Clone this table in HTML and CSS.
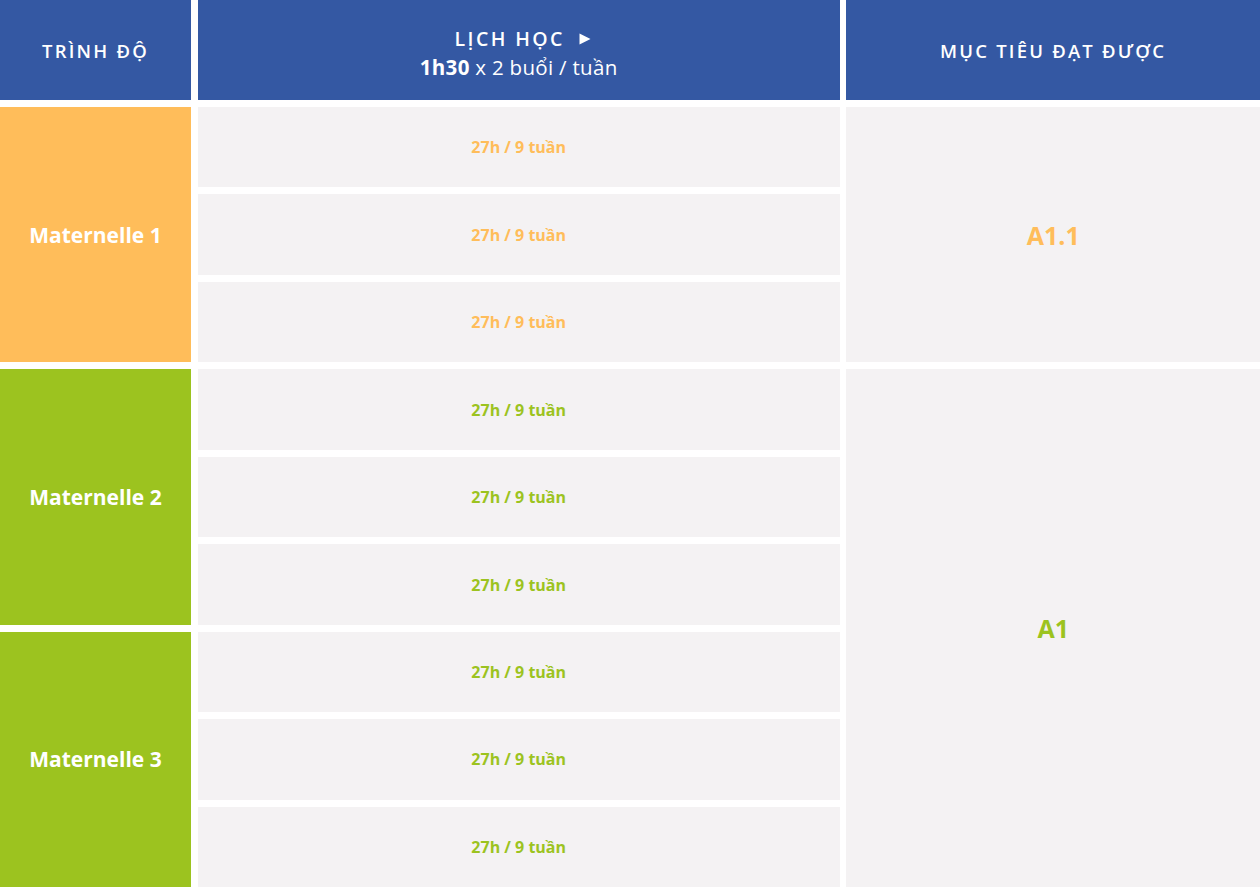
FILE: index.html
```html
<!DOCTYPE html>
<html lang="vi">
<head>
<meta charset="utf-8">
<title>Lịch học</title>
<link rel="stylesheet" href="styles.css">
</head>
<body>
<div class="table">
  <div class="head head-level">TRÌNH ĐỘ</div>
  <div class="head head-schedule">
    <div class="head-title"><span>LỊCH HỌC</span><svg class="tri" viewBox="0 0 12 12" width="12" height="12"><path d="M0.5 0.5 L11.5 6 L0.5 11.5 Z" fill="#fff"/></svg></div>
    <div class="head-sub"><b>1h30</b> x 2 buổi / tuần</div>
  </div>
  <div class="head head-goal">MỤC TIÊU ĐẠT ĐƯỢC</div>

  <div class="level orange r2">Maternelle 1</div>
  <div class="level green r5">Maternelle 2</div>
  <div class="level green r8">Maternelle 3</div>

  <div class="slot t-orange">27h / 9 tuần</div>
  <div class="slot t-orange">27h / 9 tuần</div>
  <div class="slot t-orange">27h / 9 tuần</div>
  <div class="slot t-green">27h / 9 tuần</div>
  <div class="slot t-green">27h / 9 tuần</div>
  <div class="slot t-green">27h / 9 tuần</div>
  <div class="slot t-green">27h / 9 tuần</div>
  <div class="slot t-green">27h / 9 tuần</div>
  <div class="slot t-green">27h / 9 tuần</div>

  <div class="goal t-orange g1">A1.1</div>
  <div class="goal t-green g2">A1</div>
</div>
</body>
</html>
```
FILE: styles.css
```css
html, body {
  margin: 0;
  padding: 0;
  background: #ffffff;
}
body {
  font-family: "Open Sans", "Liberation Sans", sans-serif;
}
.table {
  display: grid;
  grid-template-columns: 191px 642px 1fr;
  grid-template-rows: 100px repeat(9, 80.8px);
  column-gap: 6.7px;
  row-gap: 6.7px;
  width: 1260px;
}
.table > div {
  display: flex;
  align-items: center;
  justify-content: center;
  text-align: center;
}
.head {
  background: #3458a3;
  color: #ffffff;
  font-weight: 600;
  font-size: 18.5px;
  letter-spacing: 2.2px;
}
.head-schedule {
  flex-direction: column;
  padding-top: 5px;
}
.head-title {
  display: flex;
  align-items: center;
  gap: 14px;
  font-size: 19.5px;
  letter-spacing: 2.4px;
  line-height: 28px;
  margin-left: 8px;
}
.tri {
  display: block;
  margin-top: 1px;
}
.head-sub {
  font-size: 20.5px;
  font-weight: 400;
  letter-spacing: 0.3px;
  line-height: 28px;
}
.head-sub b {
  font-weight: 700;
}
.level {
  grid-column: 1;
  color: #ffffff;
  font-weight: 700;
  font-size: 21px;
}
.r2 { grid-row: 2 / span 3; }
.r5 { grid-row: 5 / span 3; }
.r8 { grid-row: 8 / span 3; }
.orange { background: #ffbd5a; }
.green { background: #9cc31f; }
.slot {
  grid-column: 2;
  background: #f4f2f3;
  font-weight: 700;
  font-size: 16px;
}
.goal {
  grid-column: 3;
  background: #f4f2f3;
  font-weight: 700;
  font-size: 25px;
}
.g1 { grid-row: 2 / span 3; }
.g2 { grid-row: 5 / span 6; }
.t-orange { color: #ffbd5a; }
.t-green { color: #9cc31f; }
```
